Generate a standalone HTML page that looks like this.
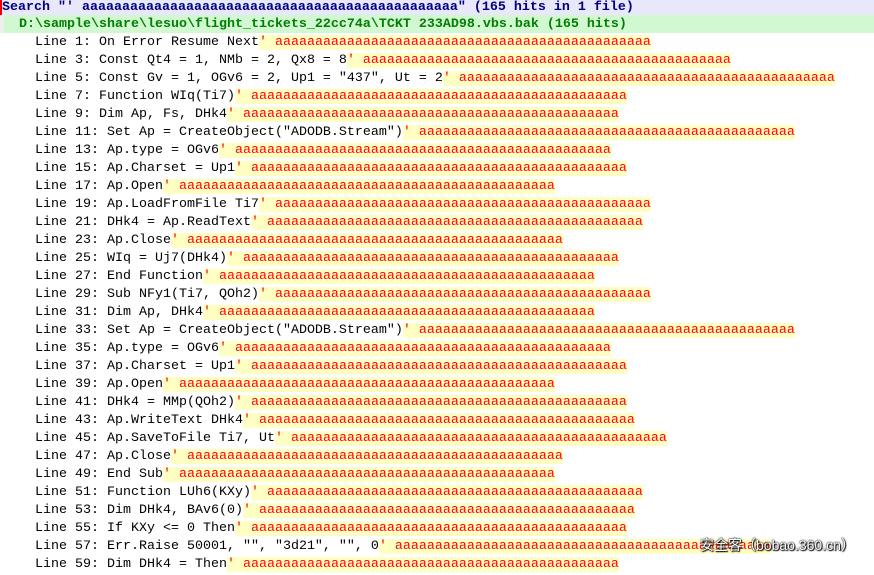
<!DOCTYPE html>
<html><head><meta charset="utf-8"><style>
body{margin:0;width:874px;height:561px;overflow:hidden;background:#fff;font-family:"Liberation Mono",monospace;font-size:13.33px;position:relative;}
.r{position:absolute;left:0;white-space:pre;height:18px;line-height:18px;}
.h{top:0;height:15px;line-height:15px;width:872px;padding-left:2px;background:#e8e8fa;color:#000080;font-weight:bold;}
.h:before{content:"";position:absolute;left:0;top:0;width:2px;height:15px;background:#e00;}
.f{top:15px;width:871px;padding-left:3px;background:#d2f8d2;color:#008000;font-weight:bold;line-height:19px;}
.f:before{content:"";position:absolute;left:0;top:0;width:4px;height:18px;background:#eee;}
.l{left:35px;color:#000;line-height:20px;}
.y{background:#ffffc4;color:#f00;}
.wm{position:absolute;left:700px;top:535px;font-family:"Liberation Sans","Noto Sans CJK SC",sans-serif;font-size:14px;color:#fff;text-shadow:0 0 2px #000,0 0 1px #000,1px 1px 1px #000;white-space:pre;}
</style></head><body>
<div class="r h">Search "' aaaaaaaaaaaaaaaaaaaaaaaaaaaaaaaaaaaaaaaaaaaaaaa" (165 hits in 1 file)</div>
<div class="r f">  D:\sample\share\lesuo\flight_tickets_22cc74a\TCKT 233AD98.vbs.bak (165 hits)</div>
<div id="c"></div>
<div class="wm">安全客（bobao.360.cn）</div>
<script>
var L=["Line 1: On Error Resume Next","Line 3: Const Qt4 = 1, NMb = 2, Qx8 = 8","Line 5: Const Gv = 1, OGv6 = 2, Up1 = \"437\", Ut = 2","Line 7: Function WIq(Ti7)","Line 9: Dim Ap, Fs, DHk4","Line 11: Set Ap = CreateObject(\"ADODB.Stream\")","Line 13: Ap.type = OGv6","Line 15: Ap.Charset = Up1","Line 17: Ap.Open","Line 19: Ap.LoadFromFile Ti7","Line 21: DHk4 = Ap.ReadText","Line 23: Ap.Close","Line 25: WIq = Uj7(DHk4)","Line 27: End Function","Line 29: Sub NFy1(Ti7, QOh2)","Line 31: Dim Ap, DHk4","Line 33: Set Ap = CreateObject(\"ADODB.Stream\")","Line 35: Ap.type = OGv6","Line 37: Ap.Charset = Up1","Line 39: Ap.Open","Line 41: DHk4 = MMp(QOh2)","Line 43: Ap.WriteText DHk4","Line 45: Ap.SaveToFile Ti7, Ut","Line 47: Ap.Close","Line 49: End Sub","Line 51: Function LUh6(KXy)","Line 53: Dim DHk4, BAv6(0)","Line 55: If KXy <= 0 Then","Line 57: Err.Raise 50001, \"\", \"3d21\", \"\", 0","Line 59: Dim DHk4 = Then"];
var h="";
L.forEach(function(t,i){var n=(i==1)?46:47;var a="' "+"a".repeat(n);var e=t.replace(/&/g,"&amp;").replace(/</g,"&lt;");h+='<div class="r l" style="top:'+(33+i*18)+'px">'+e+'<span class="y">'+a+'</span></div>';});
document.getElementById("c").innerHTML=h;
</script>
</body></html>
